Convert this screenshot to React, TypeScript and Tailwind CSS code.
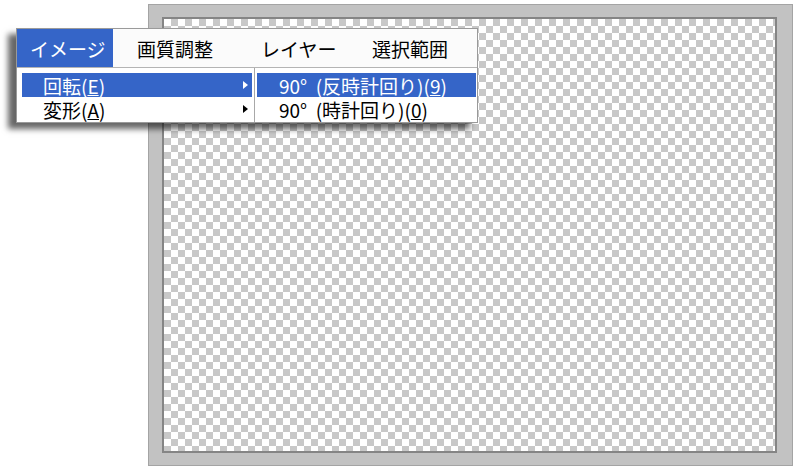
export default function App() {
  const bar = [
    { label: "画質調整", w: "w-[124px]" },
    { label: "レイヤー", w: "w-[111px]" },
    { label: "選択範囲", w: "w-[90px]" },
  ]

  return (
    <div className="relative w-[800px] h-[472px] overflow-hidden bg-white font-['Noto_Sans_CJK_JP','Noto_Sans',sans-serif]">
      {/* canvas frame */}
      <div className="pl-[148px] pt-[4px]">
        <div className="w-[645px] h-[462px] bg-[#c2c2c2] border border-[#a4a4a4] pl-[13px] pr-[15px] pt-[12px] pb-[12px]">
          <div className="w-full h-full border-2 border-[#858585] bg-white bg-[conic-gradient(#c8c8c8_25%,#ffffff_0_50%,#c8c8c8_0_75%,#ffffff_0)] bg-[length:14px_14px]" />
        </div>
      </div>

      {/* menu */}
      <div className="absolute left-[16px] top-[28px] w-[462px] bg-white border border-[#9a9a9a] shadow-[-8px_6px_6px_rgba(0,0,0,0.6)] text-[19px] leading-none">
        <div className="flex h-[39px] border-b border-[#b4b4b4] bg-[#fbfbfb]">
          <div className="w-[96px] bg-[#3565c8] text-white flex items-center pl-[13px]">イメージ</div>
          <div className="w-[24px]" />
          {bar.map((b) => (
            <div key={b.label} className={`${b.w} flex items-center text-black`}>
              {b.label}
            </div>
          ))}
        </div>

        <div className="flex h-[54px]">
          <div className="w-[238px] border-r border-[#a8a8a8] pt-[5px] pl-[5px] pr-[2px]">
            <MenuRow active>
              回転(<span className="underline">E</span>)
            </MenuRow>
            <MenuRow>
              変形(<span className="underline">A</span>)
            </MenuRow>
          </div>
          <div className="flex-1 pt-[5px] pl-[2px] pr-[1px]">
            <SubRow active>
              90°&nbsp; (反時計回り)(<span className="underline">9</span>)
            </SubRow>
            <SubRow>
              90°&nbsp; (時計回り)(<span className="underline">0</span>)
            </SubRow>
          </div>
        </div>
      </div>
    </div>
  )
}

function MenuRow({ active, children }: { active?: boolean; children: React.ReactNode }) {
  return (
    <div
      className={`h-[24px] flex items-center pl-[21px] pr-[4px] ${
        active ? "bg-[#3565c8] text-white" : "text-black"
      }`}
    >
      <span className="flex-1">{children}</span>
      <svg width="5" height="8" viewBox="0 0 5 8">
        <path d="M0 0 L5 4 L0 8 Z" fill={active ? "#ffffff" : "#000000"} />
      </svg>
    </div>
  )
}

function SubRow({ active, children }: { active?: boolean; children: React.ReactNode }) {
  return (
    <div
      className={`h-[24px] flex items-center pl-[22px] ${
        active ? "bg-[#3565c8] text-white" : "text-black"
      }`}
    >
      {children}
    </div>
  )
}
